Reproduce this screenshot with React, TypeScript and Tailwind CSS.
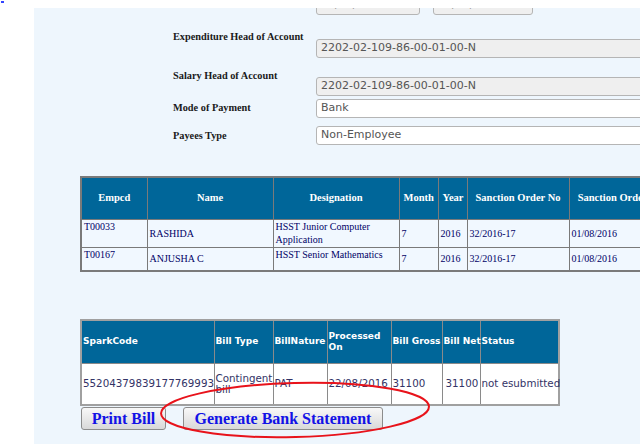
import React from "react";

const serif = "font-['Liberation_Serif','Times_New_Roman',serif]";
const sans = "font-['DejaVu_Sans',Verdana,sans-serif]";

function Field({ value, disabled, className }: { value: string; disabled?: boolean; className?: string }) {
  return (
    <div
      className={`flex h-[19px] shrink-0 items-center rounded-[3px] border border-[#b5b5b5] pl-[4px] text-[11px] text-[#555] ${sans} ${
        disabled ? "bg-[#efefef]" : "bg-white"
      } ${className ?? ""}`}
    >
      {value}
    </div>
  );
}

const staff = [
  { code: "T00033", name: "RASHIDA", desig: "HSST Junior Computer Application", h: "h-[28px]" },
  { code: "T00167", name: "ANJUSHA C", desig: "HSST Senior Mathematics", h: "h-[24px]" },
];

export default function App() {
  const th1 = "border border-[#7a7a7a] px-1 text-center text-[10.5px] font-bold text-white";
  const td1 = "border border-[#7a7a7a] px-[2px] text-[10px] text-[#000066] align-middle leading-[13px]";
  const th2 = "border border-[#8a8a8a] px-[1px] text-left text-[9px] font-bold leading-[11px] text-white";
  const td2 = "border border-[#8a8a8a] px-[1px] text-left text-[10.3px] leading-[11px] text-[#333366]";
  const label = "w-[143px] shrink-0 whitespace-nowrap leading-[14px]";

  return (
    <div className="relative h-[444px] w-[640px] overflow-hidden bg-white">
      <div className="absolute left-[1px] top-[1px] h-[2px] w-[3px] bg-[#3344ff]" />

      <div className="ml-[34px] mt-[8px] h-[436px] overflow-hidden bg-[#eef6fd]">
        {/* date inputs, cut at the top */}
        <div className="-mt-[12px] ml-[282px] flex gap-[13px]">
          <Field value="01/07/2016" disabled className="w-[104px] text-[#999]" />
          <Field value="31/07/2016" disabled className="w-[100px] text-[#999]" />
        </div>

        <div className={`ml-[139px] mt-[14px] flex flex-col text-[10.3px] font-bold text-[#1a1a1a] ${serif}`}>
          <div className="flex h-[29px] items-start">
            <div className={`${label} mt-[1px]`}>Expenditure Head of Account</div>
            <Field value="2202-02-109-86-00-01-00-N" disabled className="mt-[10px] w-[340px] font-normal" />
          </div>
          <div className="flex h-[38px] items-start">
            <div className={`${label} mt-[11px]`}>Salary Head of Account</div>
            <Field value="2202-02-109-86-00-01-00-N" disabled className="mt-[19px] w-[340px] font-normal" />
          </div>
          <div className="flex h-[22px] items-start">
            <div className={`${label} mt-[5px]`}>Mode of Payment</div>
            <Field value="Bank" className="mt-[3px] w-[340px] font-normal" />
          </div>
          <div className="flex h-[27px] items-start">
            <div className={`${label} mt-[11px]`}>Payees Type</div>
            <Field value="Non-Employee" className="mt-[8px] w-[340px] font-normal" />
          </div>
        </div>

        {/* employee table */}
        <table className={`ml-[46px] mt-[31px] w-[601px] table-fixed border-collapse border-2 border-[#7a7a7a] ${serif}`}>
          <colgroup>
            <col className="w-[66px]" />
            <col className="w-[126px]" />
            <col className="w-[126px]" />
            <col className="w-[39px]" />
            <col className="w-[29px]" />
            <col className="w-[102px]" />
            <col />
          </colgroup>
          <thead>
            <tr className="h-[42px] bg-[#006699]">
              <th className={th1}>Empcd</th>
              <th className={th1}>Name</th>
              <th className={th1}>Designation</th>
              <th className={th1}>Month</th>
              <th className={th1}>Year</th>
              <th className={`${th1} whitespace-nowrap`}>Sanction Order No</th>
              <th className={`${th1} whitespace-nowrap`}>Sanction Order Date</th>
            </tr>
          </thead>
          <tbody>
            {staff.map((s) => (
              <tr key={s.code} className={`${s.h} bg-[#f1f8ff]`}>
                <td className={`${td1} !align-top`}>{s.code}</td>
                <td className={td1}>{s.name}</td>
                <td className={`${td1} !align-top`}>{s.desig}</td>
                <td className={td1}>7</td>
                <td className={td1}>2016</td>
                <td className={td1}>32/2016-17</td>
                <td className={td1}>01/08/2016</td>
              </tr>
            ))}
          </tbody>
        </table>

        {/* bill table */}
        <table className={`ml-[46px] mt-[47px] w-[480px] table-fixed border-collapse border-2 border-[#a0a0a0] ${sans}`}>
          <colgroup>
            <col className="w-[133px]" />
            <col className="w-[59px]" />
            <col className="w-[54px]" />
            <col className="w-[64px]" />
            <col className="w-[51px]" />
            <col className="w-[38px]" />
            <col />
          </colgroup>
          <thead>
            <tr className="h-[43px] bg-[#006699]">
              <th className={th2}>SparkCode</th>
              <th className={th2}>Bill Type</th>
              <th className={th2}>BillNature</th>
              <th className={th2}>Processed On</th>
              <th className={`${th2} whitespace-nowrap`}>Bill Gross</th>
              <th className={`${th2} whitespace-nowrap`}>Bill Net</th>
              <th className={th2}>Status</th>
            </tr>
          </thead>
          <tbody>
            <tr className="h-[42px] bg-white">
              <td className={td2}>55204379839177769993</td>
              <td className={td2}>Contingent bill</td>
              <td className={td2}>PAT</td>
              <td className={td2}>22/08/2016</td>
              <td className={td2}>31100</td>
              <td className={`${td2} pl-[3px]`}>31100</td>
              <td className={`${td2} whitespace-nowrap`}>not esubmitted</td>
            </tr>
          </tbody>
        </table>

        <div className={`ml-[47px] mt-[1px] flex gap-[17px] ${serif}`}>
          <button className="h-[23px] w-[85px] rounded-[3px] border border-[#8c8c8c] bg-gradient-to-b from-[#f8f8f8] to-[#d9d9d9] text-[16px] font-bold leading-none text-[#1212e6]">
            Print Bill
          </button>
          <button className="h-[23px] w-[200px] rounded-[3px] border border-[#8c8c8c] bg-gradient-to-b from-[#f8f8f8] to-[#d9d9d9] text-[16px] font-bold leading-none text-[#1212e6]">
            Generate Bank Statement
          </button>
        </div>
      </div>

      <svg className="pointer-events-none absolute left-0 top-0" width="640" height="444">
        <ellipse
          cx="295"
          cy="410"
          rx="134"
          ry="27"
          fill="none"
          stroke="#e8131b"
          strokeWidth="2"
          transform="rotate(-1.5 295 410)"
        />
      </svg>
    </div>
  );
}
